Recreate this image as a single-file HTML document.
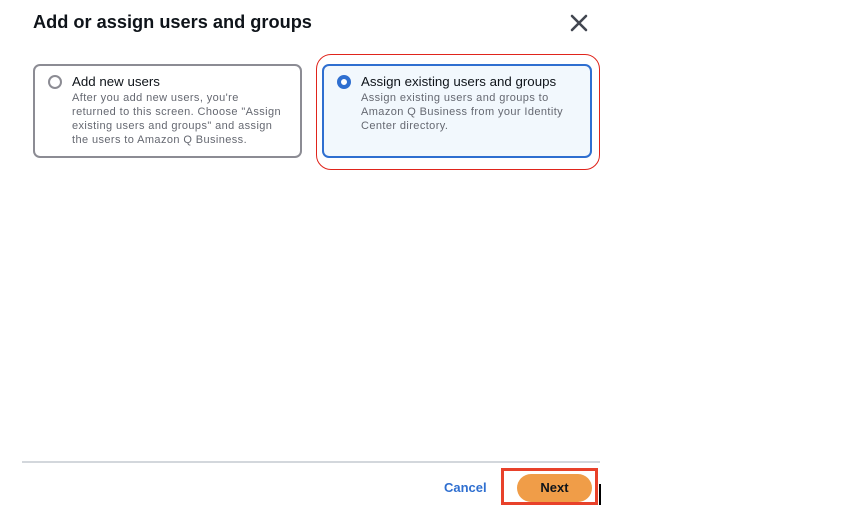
<!DOCTYPE html>
<html><head><style>
body{margin:0;width:846px;height:526px;background:#fff;font-family:"Liberation Sans",sans-serif;position:relative;overflow:hidden}
.a{position:absolute}
h1{position:absolute;left:33px;top:12px;margin:0;font-size:18.2px;font-weight:bold;color:#0f141a}
.card{position:absolute;top:64px;height:89px;border-radius:7px;box-sizing:border-box}
.t{position:absolute;left:37px;top:8px;font-size:13.3px;color:#0f141a}
.d{position:absolute;left:37px;top:25px;font-size:11px;letter-spacing:0.4px;line-height:14px;color:#656871;white-space:nowrap}
.r{position:absolute;left:13px;top:9px;width:14px;height:14px;border-radius:50%;box-sizing:border-box}
</style></head><body>
<h1>Add or assign users and groups</h1>
<svg class="a" style="left:570px;top:14px" width="18" height="18"><path d="M2 2L16 16M16 2L2 16" stroke="#424650" stroke-width="2.6" stroke-linecap="round"/></svg>
<div class="card" style="left:33px;width:269px;height:94px;border:2px solid #8c8c94">
 <div class="r" style="border:2px solid #8c8c94"></div>
 <div class="t">Add new users</div>
 <div class="d">After you add new users, you're<br>returned to this screen. Choose "Assign<br>existing users and groups" and assign<br>the users to Amazon Q Business.</div>
</div>
<div class="a" style="left:316px;top:54px;width:284px;height:116px;border:1.5px solid #e0241b;border-radius:15px;box-sizing:border-box"></div>
<div class="card" style="left:322px;width:270px;height:94px;border:2px solid #2f6fd0;background:#f2f8fd">
 <div class="r" style="border:4px solid #2f6fd0;background:#fff"></div>
 <div class="t">Assign existing users and groups</div>
 <div class="d">Assign existing users and groups to<br>Amazon Q Business from your Identity<br>Center directory.</div>
</div>
<div class="a" style="left:22px;top:461px;width:578px;height:2px;background:#d3d7dc"></div>
<div class="a" style="left:444px;top:480px;font-size:13px;font-weight:bold;color:#2f6fd0">Cancel</div>
<div class="a" style="left:501px;top:468px;width:97px;height:37px;border:3px solid #e8412a;box-sizing:border-box"></div>
<div class="a" style="left:517px;top:474px;width:75px;height:28px;border-radius:14px;background:#f09d48;text-align:center;line-height:28px;font-size:13px;font-weight:bold;color:#0f141a">Next</div>
<div class="a" style="left:599px;top:484px;width:2px;height:21px;background:#000"></div>
</body></html>
